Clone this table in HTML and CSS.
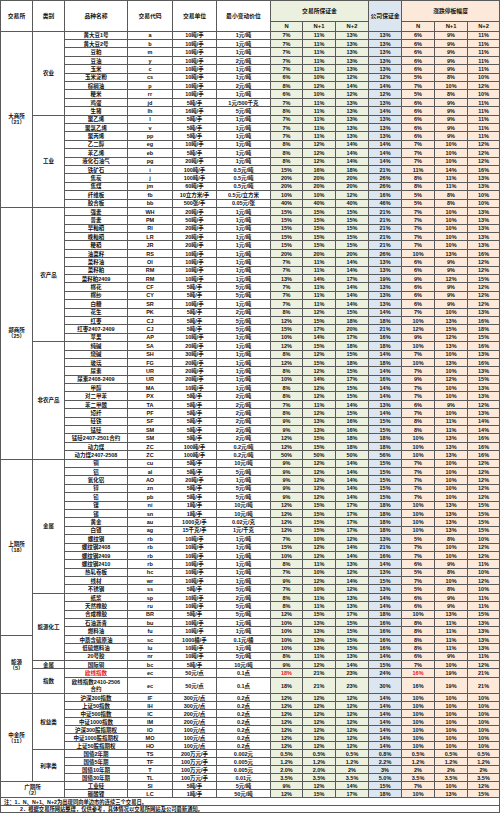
FILE: index.html
```html
<!DOCTYPE html>
<html lang="zh">
<head>
<meta charset="utf-8">
<title>保证金表</title>
<link rel="stylesheet" href="styles.css">
</head>
<body>
<table class="mt">
<colgroup>
<col class="w1"><col class="w2"><col class="w3"><col class="w4"><col class="w5"><col class="w6">
<col class="cg w7"><col class="cg w8"><col class="cg w9"><col class="cb w10"><col class="co w11"><col class="co w12"><col class="co w13">
</colgroup>
<thead>
<tr class="h1">
<th rowspan="2">交易所</th><th rowspan="2">类别</th><th rowspan="2">品种名称</th><th rowspan="2">交易代码</th><th rowspan="2">交易单位</th><th rowspan="2">最小变动价位</th>
<th colspan="3" class="hg">交易所保证金</th><th rowspan="2" class="hb">公司保证金</th><th colspan="3" class="ho">涨跌停板幅度</th>
</tr>
<tr class="h2">
<th class="hg">N</th><th class="hg">N+1</th><th class="hg">N+2</th><th class="ho">N</th><th class="ho">N+1</th><th class="ho">N+2</th>
</tr>
</thead>
<tbody>
<tr><td rowspan="21">大商所<br>（21）</td><td rowspan="10">农业</td><td>黄大豆1号</td><td>a</td><td>10吨/手</td><td>1元/吨</td><td>7%</td><td>11%</td><td>13%</td><td>13%</td><td>6%</td><td>9%</td><td>11%</td></tr>
<tr><td>黄大豆2号</td><td>b</td><td>10吨/手</td><td>1元/吨</td><td>7%</td><td>11%</td><td>13%</td><td>13%</td><td>6%</td><td>9%</td><td>11%</td></tr>
<tr><td>豆粕</td><td>m</td><td>10吨/手</td><td>1元/吨</td><td>7%</td><td>11%</td><td>13%</td><td>13%</td><td>6%</td><td>9%</td><td>11%</td></tr>
<tr><td>豆油</td><td>y</td><td>10吨/手</td><td>2元/吨</td><td>7%</td><td>11%</td><td>13%</td><td>13%</td><td>6%</td><td>9%</td><td>11%</td></tr>
<tr><td>玉米</td><td>c</td><td>10吨/手</td><td>1元/吨</td><td>7%</td><td>11%</td><td>13%</td><td>13%</td><td>6%</td><td>9%</td><td>11%</td></tr>
<tr><td>玉米淀粉</td><td>cs</td><td>10吨/手</td><td>1元/吨</td><td>6%</td><td>10%</td><td>12%</td><td>12%</td><td>5%</td><td>8%</td><td>10%</td></tr>
<tr><td>棕榈油</td><td>p</td><td>10吨/手</td><td>2元/吨</td><td>8%</td><td>12%</td><td>14%</td><td>14%</td><td>7%</td><td>10%</td><td>12%</td></tr>
<tr><td>粳米</td><td>rr</td><td>10吨/手</td><td>1元/吨</td><td>6%</td><td>10%</td><td>12%</td><td>12%</td><td>5%</td><td>8%</td><td>10%</td></tr>
<tr><td>鸡蛋</td><td>jd</td><td>5吨/手</td><td>1元/500千克</td><td>7%</td><td>11%</td><td>13%</td><td>13%</td><td>6%</td><td>9%</td><td>11%</td></tr>
<tr><td>生猪</td><td>lh</td><td>16吨/手</td><td>5元/吨</td><td>8%</td><td>11%</td><td>13%</td><td>14%</td><td>6%</td><td>9%</td><td>11%</td></tr>
<tr><td rowspan="11">工业</td><td>聚乙烯</td><td>l</td><td>5吨/手</td><td>1元/吨</td><td>7%</td><td>11%</td><td>13%</td><td>13%</td><td>6%</td><td>9%</td><td>11%</td></tr>
<tr><td>聚氯乙烯</td><td>v</td><td>5吨/手</td><td>1元/吨</td><td>7%</td><td>11%</td><td>13%</td><td>13%</td><td>6%</td><td>9%</td><td>11%</td></tr>
<tr><td>聚丙烯</td><td>pp</td><td>5吨/手</td><td>1元/吨</td><td>7%</td><td>11%</td><td>13%</td><td>13%</td><td>6%</td><td>9%</td><td>11%</td></tr>
<tr><td>乙二醇</td><td>eg</td><td>10吨/手</td><td>1元/吨</td><td>8%</td><td>12%</td><td>14%</td><td>14%</td><td>7%</td><td>10%</td><td>12%</td></tr>
<tr><td>苯乙烯</td><td>eb</td><td>5吨/手</td><td>1元/吨</td><td>8%</td><td>12%</td><td>14%</td><td>14%</td><td>7%</td><td>10%</td><td>12%</td></tr>
<tr><td>液化石油气</td><td>pg</td><td>20吨/手</td><td>1元/吨</td><td>8%</td><td>12%</td><td>14%</td><td>14%</td><td>7%</td><td>10%</td><td>12%</td></tr>
<tr><td>铁矿石</td><td>i</td><td>100吨/手</td><td>0.5元/吨</td><td>15%</td><td>16%</td><td>18%</td><td>21%</td><td>11%</td><td>14%</td><td>16%</td></tr>
<tr><td>焦炭</td><td>j</td><td>100吨/手</td><td>0.5元/吨</td><td>20%</td><td>20%</td><td>20%</td><td>26%</td><td>8%</td><td>11%</td><td>13%</td></tr>
<tr><td>焦煤</td><td>jm</td><td>60吨/手</td><td>0.5元/吨</td><td>20%</td><td>20%</td><td>20%</td><td>26%</td><td>8%</td><td>11%</td><td>13%</td></tr>
<tr><td>纤维板</td><td>fb</td><td>10立方米/手</td><td>0.5元/立方米</td><td>10%</td><td>10%</td><td>12%</td><td>16%</td><td>5%</td><td>8%</td><td>10%</td></tr>
<tr><td>胶合板</td><td>bb</td><td>500张/手</td><td>0.05元/张</td><td>40%</td><td>40%</td><td>40%</td><td>46%</td><td>5%</td><td>8%</td><td>10%</td></tr>

<tr class="ex"><td rowspan="30">郑商所<br>（25）</td><td rowspan="16">农产品</td><td>强麦</td><td>WH</td><td>20吨/手</td><td>1元/吨</td><td>15%</td><td>15%</td><td>15%</td><td>21%</td><td>7%</td><td>10%</td><td>13%</td></tr>
<tr><td>普麦</td><td>PM</td><td>50吨/手</td><td>1元/吨</td><td>15%</td><td>15%</td><td>15%</td><td>21%</td><td>7%</td><td>10%</td><td>13%</td></tr>
<tr><td>早籼稻</td><td>RI</td><td>20吨/手</td><td>1元/吨</td><td>15%</td><td>15%</td><td>15%</td><td>21%</td><td>7%</td><td>10%</td><td>13%</td></tr>
<tr><td>晚籼稻</td><td>LR</td><td>20吨/手</td><td>1元/吨</td><td>15%</td><td>15%</td><td>15%</td><td>21%</td><td>7%</td><td>10%</td><td>13%</td></tr>
<tr><td>粳稻</td><td>JR</td><td>20吨/手</td><td>1元/吨</td><td>15%</td><td>15%</td><td>15%</td><td>21%</td><td>7%</td><td>10%</td><td>13%</td></tr>
<tr><td>油菜籽</td><td>RS</td><td>10吨/手</td><td>1元/吨</td><td>20%</td><td>20%</td><td>20%</td><td>26%</td><td>10%</td><td>13%</td><td>16%</td></tr>
<tr><td>菜籽油</td><td>OI</td><td>10吨/手</td><td>1元/吨</td><td>7%</td><td>11%</td><td>14%</td><td>13%</td><td>6%</td><td>9%</td><td>12%</td></tr>
<tr><td>菜籽粕</td><td>RM</td><td>10吨/手</td><td>1元/吨</td><td>7%</td><td>11%</td><td>14%</td><td>13%</td><td>6%</td><td>9%</td><td>12%</td></tr>
<tr><td>菜籽粕2409</td><td>RM</td><td>10吨/手</td><td>1元/吨</td><td>13%</td><td>14%</td><td>17%</td><td>19%</td><td>9%</td><td>12%</td><td>15%</td></tr>
<tr><td>棉花</td><td>CF</td><td>5吨/手</td><td>5元/吨</td><td>7%</td><td>11%</td><td>14%</td><td>13%</td><td>6%</td><td>9%</td><td>12%</td></tr>
<tr><td>棉纱</td><td>CY</td><td>5吨/手</td><td>5元/吨</td><td>7%</td><td>11%</td><td>14%</td><td>13%</td><td>6%</td><td>9%</td><td>12%</td></tr>
<tr><td>白糖</td><td>SR</td><td>10吨/手</td><td>1元/吨</td><td>7%</td><td>11%</td><td>14%</td><td>13%</td><td>6%</td><td>9%</td><td>12%</td></tr>
<tr><td>花生</td><td>PK</td><td>5吨/手</td><td>2元/吨</td><td>8%</td><td>12%</td><td>15%</td><td>14%</td><td>7%</td><td>10%</td><td>13%</td></tr>
<tr><td>红枣</td><td>CJ</td><td>5吨/手</td><td>5元/吨</td><td>12%</td><td>15%</td><td>18%</td><td>18%</td><td>10%</td><td>13%</td><td>16%</td></tr>
<tr><td>红枣2407-2409</td><td>CJ</td><td>5吨/手</td><td>5元/吨</td><td>15%</td><td>17%</td><td>20%</td><td>21%</td><td>12%</td><td>15%</td><td>18%</td></tr>
<tr><td>苹果</td><td>AP</td><td>10吨/手</td><td>1元/吨</td><td>10%</td><td>14%</td><td>17%</td><td>16%</td><td>9%</td><td>12%</td><td>15%</td></tr>
<tr><td rowspan="14">非农产品</td><td>纯碱</td><td>SA</td><td>20吨/手</td><td>1元/吨</td><td>12%</td><td>15%</td><td>18%</td><td>18%</td><td>10%</td><td>13%</td><td>16%</td></tr>
<tr><td>烧碱</td><td>SH</td><td>30吨/手</td><td>1元/吨</td><td>8%</td><td>12%</td><td>15%</td><td>14%</td><td>7%</td><td>10%</td><td>13%</td></tr>
<tr><td>玻璃</td><td>FG</td><td>20吨/手</td><td>1元/吨</td><td>12%</td><td>15%</td><td>18%</td><td>18%</td><td>10%</td><td>13%</td><td>16%</td></tr>
<tr><td>尿素</td><td>UR</td><td>20吨/手</td><td>1元/吨</td><td>8%</td><td>12%</td><td>15%</td><td>14%</td><td>7%</td><td>10%</td><td>13%</td></tr>
<tr><td>尿素2408-2409</td><td>UR</td><td>20吨/手</td><td>1元/吨</td><td>10%</td><td>14%</td><td>17%</td><td>16%</td><td>9%</td><td>12%</td><td>15%</td></tr>
<tr><td>甲醇</td><td>MA</td><td>10吨/手</td><td>1元/吨</td><td>8%</td><td>12%</td><td>15%</td><td>14%</td><td>7%</td><td>10%</td><td>13%</td></tr>
<tr><td>对二甲苯</td><td>PX</td><td>5吨/手</td><td>2元/吨</td><td>8%</td><td>12%</td><td>15%</td><td>14%</td><td>7%</td><td>10%</td><td>13%</td></tr>
<tr><td>苯二甲酸</td><td>TA</td><td>5吨/手</td><td>2元/吨</td><td>7%</td><td>11%</td><td>14%</td><td>13%</td><td>6%</td><td>9%</td><td>12%</td></tr>
<tr><td>短纤</td><td>PF</td><td>5吨/手</td><td>2元/吨</td><td>8%</td><td>12%</td><td>15%</td><td>14%</td><td>7%</td><td>10%</td><td>13%</td></tr>
<tr><td>硅铁</td><td>SF</td><td>5吨/手</td><td>2元/吨</td><td>9%</td><td>13%</td><td>16%</td><td>15%</td><td>8%</td><td>11%</td><td>14%</td></tr>
<tr><td>锰硅</td><td>SM</td><td>5吨/手</td><td>2元/吨</td><td>9%</td><td>13%</td><td>16%</td><td>15%</td><td>8%</td><td>11%</td><td>14%</td></tr>
<tr><td>锰硅2407-2501合约</td><td>SM</td><td>5吨/手</td><td>2元/吨</td><td>12%</td><td>15%</td><td>18%</td><td>18%</td><td>10%</td><td>13%</td><td>16%</td></tr>
<tr><td>动力煤</td><td>ZC</td><td>100吨/手</td><td>0.2元/吨</td><td>12%</td><td>15%</td><td>18%</td><td>18%</td><td>10%</td><td>13%</td><td>16%</td></tr>
<tr><td>动力煤2407-2508</td><td>ZC</td><td>100吨/手</td><td>0.2元/吨</td><td>50%</td><td>50%</td><td>50%</td><td>56%</td><td>10%</td><td>13%</td><td>16%</td></tr>

<tr class="ex"><td rowspan="21">上期所<br>（18）</td><td rowspan="16">金属</td><td>铜</td><td>cu</td><td>5吨/手</td><td>10元/吨</td><td>9%</td><td>12%</td><td>14%</td><td>15%</td><td>7%</td><td>10%</td><td>12%</td></tr>
<tr><td>铝</td><td>al</td><td>5吨/手</td><td>5元/吨</td><td>9%</td><td>12%</td><td>14%</td><td>15%</td><td>7%</td><td>10%</td><td>12%</td></tr>
<tr><td>氧化铝</td><td>AO</td><td>20吨/手</td><td>1元/吨</td><td>9%</td><td>12%</td><td>14%</td><td>15%</td><td>7%</td><td>10%</td><td>12%</td></tr>
<tr><td>锌</td><td>zn</td><td>5吨/手</td><td>5元/吨</td><td>9%</td><td>12%</td><td>14%</td><td>15%</td><td>7%</td><td>10%</td><td>12%</td></tr>
<tr><td>铅</td><td>pb</td><td>5吨/手</td><td>5元/吨</td><td>9%</td><td>12%</td><td>14%</td><td>15%</td><td>7%</td><td>10%</td><td>12%</td></tr>
<tr><td>镍</td><td>ni</td><td>1吨/手</td><td>10元/吨</td><td>12%</td><td>15%</td><td>17%</td><td>18%</td><td>10%</td><td>13%</td><td>15%</td></tr>
<tr><td>锡</td><td>sn</td><td>1吨/手</td><td>10元/吨</td><td>12%</td><td>15%</td><td>17%</td><td>18%</td><td>10%</td><td>13%</td><td>15%</td></tr>
<tr><td>黄金</td><td>au</td><td>1000克/手</td><td>0.02元/克</td><td>12%</td><td>15%</td><td>17%</td><td>18%</td><td>10%</td><td>13%</td><td>15%</td></tr>
<tr><td>白银</td><td>ag</td><td>15千克/手</td><td>1元/千克</td><td>12%</td><td>15%</td><td>17%</td><td>18%</td><td>10%</td><td>13%</td><td>15%</td></tr>
<tr><td>螺纹钢</td><td>rb</td><td>10吨/手</td><td>1元/吨</td><td>7%</td><td>10%</td><td>12%</td><td>13%</td><td>5%</td><td>8%</td><td>10%</td></tr>
<tr><td>螺纹钢2408</td><td>rb</td><td>10吨/手</td><td>1元/吨</td><td>15%</td><td>12%</td><td>14%</td><td>21%</td><td>7%</td><td>10%</td><td>12%</td></tr>
<tr><td>螺纹钢2409</td><td>rb</td><td>10吨/手</td><td>1元/吨</td><td>10%</td><td>12%</td><td>14%</td><td>16%</td><td>7%</td><td>10%</td><td>12%</td></tr>
<tr><td>螺纹钢2410</td><td>rb</td><td>10吨/手</td><td>1元/吨</td><td>8%</td><td>11%</td><td>13%</td><td>14%</td><td>6%</td><td>9%</td><td>11%</td></tr>
<tr><td>热轧卷板</td><td>hc</td><td>10吨/手</td><td>1元/吨</td><td>7%</td><td>10%</td><td>12%</td><td>13%</td><td>5%</td><td>8%</td><td>10%</td></tr>
<tr><td>线材</td><td>wr</td><td>10吨/手</td><td>1元/吨</td><td>9%</td><td>12%</td><td>14%</td><td>15%</td><td>7%</td><td>10%</td><td>12%</td></tr>
<tr><td>不锈钢</td><td>ss</td><td>5吨/手</td><td>5元/吨</td><td>7%</td><td>10%</td><td>12%</td><td>13%</td><td>5%</td><td>8%</td><td>10%</td></tr>
<tr class="ex2"><td rowspan="8">能源化工</td><td>纸浆</td><td>sp</td><td>10吨/手</td><td>2元/吨</td><td>8%</td><td>11%</td><td>13%</td><td>14%</td><td>6%</td><td>9%</td><td>11%</td></tr>
<tr><td>天然橡胶</td><td>ru</td><td>10吨/手</td><td>5元/吨</td><td>8%</td><td>11%</td><td>13%</td><td>14%</td><td>6%</td><td>9%</td><td>11%</td></tr>
<tr><td>合成橡胶</td><td>BR</td><td>5吨/手</td><td>5元/吨</td><td>12%</td><td>15%</td><td>17%</td><td>18%</td><td>10%</td><td>13%</td><td>15%</td></tr>
<tr><td>石油沥青</td><td>bu</td><td>10吨/手</td><td>1元/吨</td><td>10%</td><td>13%</td><td>15%</td><td>16%</td><td>8%</td><td>11%</td><td>13%</td></tr>
<tr><td>燃料油</td><td>fu</td><td>10吨/手</td><td>1元/吨</td><td>10%</td><td>13%</td><td>15%</td><td>16%</td><td>8%</td><td>11%</td><td>13%</td></tr>

<tr class="ex"><td rowspan="6">能源<br>（5）</td><td>中质含硫原油</td><td>sc</td><td>1000桶/手</td><td>0.1元/桶</td><td>10%</td><td>13%</td><td>15%</td><td>16%</td><td>8%</td><td>11%</td><td>13%</td></tr>
<tr><td>低硫燃料油</td><td>lu</td><td>10吨/手</td><td>1元/吨</td><td>10%</td><td>13%</td><td>15%</td><td>16%</td><td>8%</td><td>11%</td><td>13%</td></tr>
<tr><td>20号胶</td><td>nr</td><td>10吨/手</td><td>5元/吨</td><td>8%</td><td>11%</td><td>13%</td><td>14%</td><td>6%</td><td>9%</td><td>11%</td></tr>
<tr><td>金属</td><td>国际铜</td><td>bc</td><td>5吨/手</td><td>10元/吨</td><td>9%</td><td>12%</td><td>14%</td><td>15%</td><td>7%</td><td>10%</td><td>12%</td></tr>
<tr><td rowspan="2">指数</td><td class="red">欧线指数</td><td>ec</td><td>50元/点</td><td>0.1点</td><td class="red">18%</td><td>21%</td><td>23%</td><td>24%</td><td class="red">16%</td><td>19%</td><td>21%</td></tr>
<tr class="dbl"><td class="wrap">欧线指数2410-2506<br>合约</td><td>ec</td><td>50元/点</td><td>0.1点</td><td>18%</td><td>21%</td><td>23%</td><td>30%</td><td>16%</td><td>19%</td><td>21%</td></tr>

<tr class="ex s"><td rowspan="11">中金所<br>（11）</td><td rowspan="7">权益类</td><td>沪深300指数</td><td>IF</td><td>300元/点</td><td>0.2点</td><td>12%</td><td>12%</td><td>12%</td><td>14%</td><td>10%</td><td>10%</td><td>10%</td></tr>
<tr class="s"><td>上证50指数</td><td>IH</td><td>300元/点</td><td>0.2点</td><td>12%</td><td>12%</td><td>12%</td><td>14%</td><td>10%</td><td>10%</td><td>10%</td></tr>
<tr class="s"><td>中证500指数</td><td>IC</td><td>200元/点</td><td>0.2点</td><td>12%</td><td>12%</td><td>12%</td><td>14%</td><td>10%</td><td>10%</td><td>10%</td></tr>
<tr class="s"><td>中证1000指数</td><td>IM</td><td>200元/点</td><td>0.2点</td><td>12%</td><td>12%</td><td>12%</td><td>14%</td><td>10%</td><td>10%</td><td>10%</td></tr>
<tr class="s"><td>沪深300股指期权</td><td>IO</td><td>100元/点</td><td>0.2点</td><td>12%</td><td>12%</td><td>12%</td><td>14%</td><td>10%</td><td>10%</td><td>10%</td></tr>
<tr class="s"><td>中证1000股指期权</td><td>MO</td><td>100元/点</td><td>0.2点</td><td>12%</td><td>12%</td><td>12%</td><td>14%</td><td>10%</td><td>10%</td><td>10%</td></tr>
<tr class="s"><td>上证50股指期权</td><td>HO</td><td>100元/点</td><td>0.2点</td><td>12%</td><td>12%</td><td>12%</td><td>14%</td><td>10%</td><td>10%</td><td>10%</td></tr>
<tr class="s"><td rowspan="4">利率类</td><td>国债2年期</td><td>TS</td><td>200万元/手</td><td>0.002元</td><td>0.5%</td><td>0.5%</td><td>0.5%</td><td>0.8%</td><td>0.5%</td><td>0.5%</td><td>0.5%</td></tr>
<tr class="s"><td>国债5年期</td><td>TF</td><td>100万元/手</td><td>0.005元</td><td>1.2%</td><td>1.2%</td><td>1.2%</td><td>2.2%</td><td>1.2%</td><td>1.2%</td><td>1.2%</td></tr>
<tr class="s"><td>国债10年期</td><td>T</td><td>100万元/手</td><td>0.005元</td><td>2.0%</td><td>2.0%</td><td>2%</td><td>3%</td><td>2%</td><td>2%</td><td>2%</td></tr>
<tr class="s"><td>国债30年期</td><td>TL</td><td>100万元/手</td><td>0.01元</td><td>3.5%</td><td>3.5%</td><td>3.5%</td><td>5.0%</td><td>3.5%</td><td>3.5%</td><td>3.5%</td></tr>

<tr class="ex s"><td rowspan="2" colspan="2">广期所<br>（2）</td><td>工业硅</td><td>SI</td><td>5吨/手</td><td>5元/吨</td><td>9%</td><td>12%</td><td>14%</td><td>15%</td><td>7%</td><td>10%</td><td>12%</td></tr>
<tr class="s"><td>碳酸锂</td><td>LC</td><td>1吨/手</td><td>50元/吨</td><td>12%</td><td>15%</td><td>17%</td><td>18%</td><td>10%</td><td>13%</td><td>15%</td></tr>

<tr class="note ex"><td colspan="13">注：1．N、N+1、N+2为出现同向单边市的连续三个交易日。</td></tr>
<tr class="note"><td colspan="13" class="ind">2．根据交易所网站整理，仅供参考，具体情况以交易所网站及公司最新通知。</td></tr>
</tbody>
</table>
</body>
</html>
```

FILE: styles.css
```css
html, body {
  margin: 0;
  padding: 0;
  background: #ffffff;
}

.mt {
  border-collapse: collapse;
  table-layout: fixed;
  width: 499px;
  font-family: "Liberation Sans", "Noto Sans CJK SC", sans-serif;
  font-weight: bold;
  font-size: 5.5px;
  line-height: 6px;
  color: #111;
  border: 1px solid #000;
}

.w1 { width: 32px; }
.w2 { width: 32px; }
.w3 { width: 63px; }
.w4 { width: 45px; }
.w5 { width: 44px; }
.w6 { width: 54px; }
.w7 { width: 32px; }
.w8 { width: 33px; }
.w9 { width: 33px; }
.w10 { width: 33px; }
.w11 { width: 33px; }
.w12 { width: 33px; }
.w13 { width: 32px; }

.cg { background: #ebf1de; }
.cb { background: #dce6f1; }
.co { background: #fde9d9; }

.mt th,
.mt td {
  border: 1px solid #5a5a5a;
  padding: 0;
  text-align: center;
  vertical-align: middle;
  white-space: nowrap;
  overflow: hidden;
}

.mt th {
  font-weight: bold;
  font-size: 5.8px;
  background: #ffffff;
}

.mt th.hg { background: #ebf1de; }
.mt th.hb { background: #dce6f1; }
.mt th.ho { background: #fde9d9; }

.h1 { height: 21px; }
.h2 { height: 9.7px; }

.mt tbody tr { height: 8.4px; }
.mt tbody tr.s { height: 8px; }
.mt tbody tr.dbl { height: 16.6px; }

.mt tr.ex > td { border-top: 1.5px solid #000; }
.mt tr.ex2 > td { border-top: 1.5px solid #000; }

.red { color: #e8141b; }

.wrap {
  white-space: normal;
  line-height: 7px;
}

.mt tr.note { height: 7.3px; }
.mt tr.note td {
  text-align: left;
  padding-left: 3px;
  background: #ffffff;
  font-size: 5.3px;
}
.mt tr.note td.ind { padding-left: 19px; }
```
